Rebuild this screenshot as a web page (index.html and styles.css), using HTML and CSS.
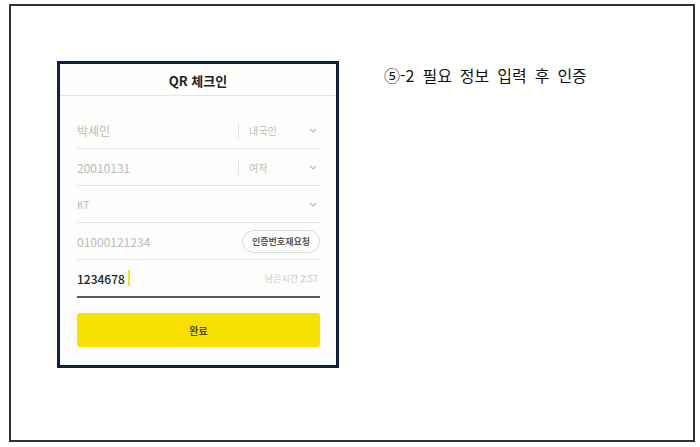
FILE: index.html
```html
<!DOCTYPE html>
<html lang="ko">
<head>
  <meta charset="UTF-8">
  <title>QR 체크인</title>
  <link rel="stylesheet" href="styles.css">
</head>
<body>

  <div class="frame">
    <div class="card">
      <div class="card-head">QR 체크인</div>
      <div class="form">
        <div class="row">
          <span class="value">박세인</span>
          <span class="divider"></span>
          <span class="select">내국인</span>
          <svg class="chev" width="8" height="5" viewBox="0 0 8 5"><path d="M1 1l3 3 3-3" fill="none" stroke="#bbb" stroke-width="1.2"/></svg>
        </div>
        <div class="row">
          <span class="value">20010131</span>
          <span class="divider"></span>
          <span class="select">여자</span>
          <svg class="chev" width="8" height="5" viewBox="0 0 8 5"><path d="M1 1l3 3 3-3" fill="none" stroke="#bbb" stroke-width="1.2"/></svg>
        </div>
        <div class="row">
          <span class="value small">KT</span>
          <svg class="chev" width="8" height="5" viewBox="0 0 8 5"><path d="M1 1l3 3 3-3" fill="none" stroke="#bbb" stroke-width="1.2"/></svg>
        </div>
        <div class="row">
          <span class="value">01000121234</span>
          <button class="resend">인증번호재요청</button>
        </div>
        <div class="row active">
          <span class="value typed">1234678</span>
          <span class="cursor"></span>
          <span class="timer">남은시간 2:57</span>
        </div>
        <button class="submit">완료</button>
      </div>
    </div>
    <p class="caption">⑤-2 필요 정보 입력 후 인증</p>
  </div>

</body>
</html>
```

FILE: styles.css
```css
* {
  margin: 0;
  padding: 0;
  box-sizing: border-box;
}

body {
  font-family: 'Noto Sans CJK KR', 'Noto Sans', sans-serif;
  background: #fff;
  color: #222;
}

.frame {
  display: flex;
  align-items: flex-start;
  width: 686px;
  height: 438px;
  margin: 4px 0 0 9px;
  border: 2px solid #333;
}

.card {
  width: 282px;
  height: 307px;
  margin: 55px 0 0 46px;
  border: 3px solid #0f1f48;
  background: #fdfefc;
}

.card-head {
  height: 32px;
  border-bottom: 1px solid #e4e6e2;
  text-align: center;
  font-size: 13px;
  font-weight: bold;
  line-height: 33px;
  color: #222;
}

.form {
  padding: 16px 16px 0 17px;
}

.row {
  display: flex;
  align-items: center;
  height: 37px;
  border-bottom: 1px solid #e2e4e0;
}

.value {
  flex: 1;
  font-size: 12px;
  color: #b9bbb8;
}

.value.small {
  font-size: 10px;
}

.divider {
  width: 1px;
  height: 15px;
  margin-right: 10px;
  background: #e4e4e4;
}

.select {
  width: 60px;
  font-size: 10px;
  color: #bbb;
}

.chev {
  margin-right: 3px;
}

.resend {
  height: 23px;
  padding: 0 9px;
  border: 1px solid #d9ddd8;
  border-radius: 12px;
  background: #fdfefb;
  font-family: inherit;
  font-size: 9px;
  font-weight: bold;
  color: #5a5a5a;
}

.row.active {
  height: 38px;
  border-bottom: 2px solid #5a5a5a;
}

.typed {
  flex: none;
  color: #222;
  font-weight: 500;
}

.cursor {
  width: 2px;
  height: 16px;
  margin-left: 3px;
  background: #f4de2c;
}

.timer {
  margin-left: auto;
  margin-right: 2px;
  font-size: 9px;
  color: #c5c7c3;
}

.submit {
  display: block;
  width: 100%;
  height: 34px;
  margin-top: 15px;
  border: none;
  border-radius: 3px;
  background: #f8e100;
  font-family: inherit;
  font-size: 10px;
  font-weight: bold;
  color: #4a4a2a;
}

.caption {
  margin: 57px 0 0 45px;
  font-size: 16px;
  word-spacing: 3.5px;
  color: #111;
}
```
